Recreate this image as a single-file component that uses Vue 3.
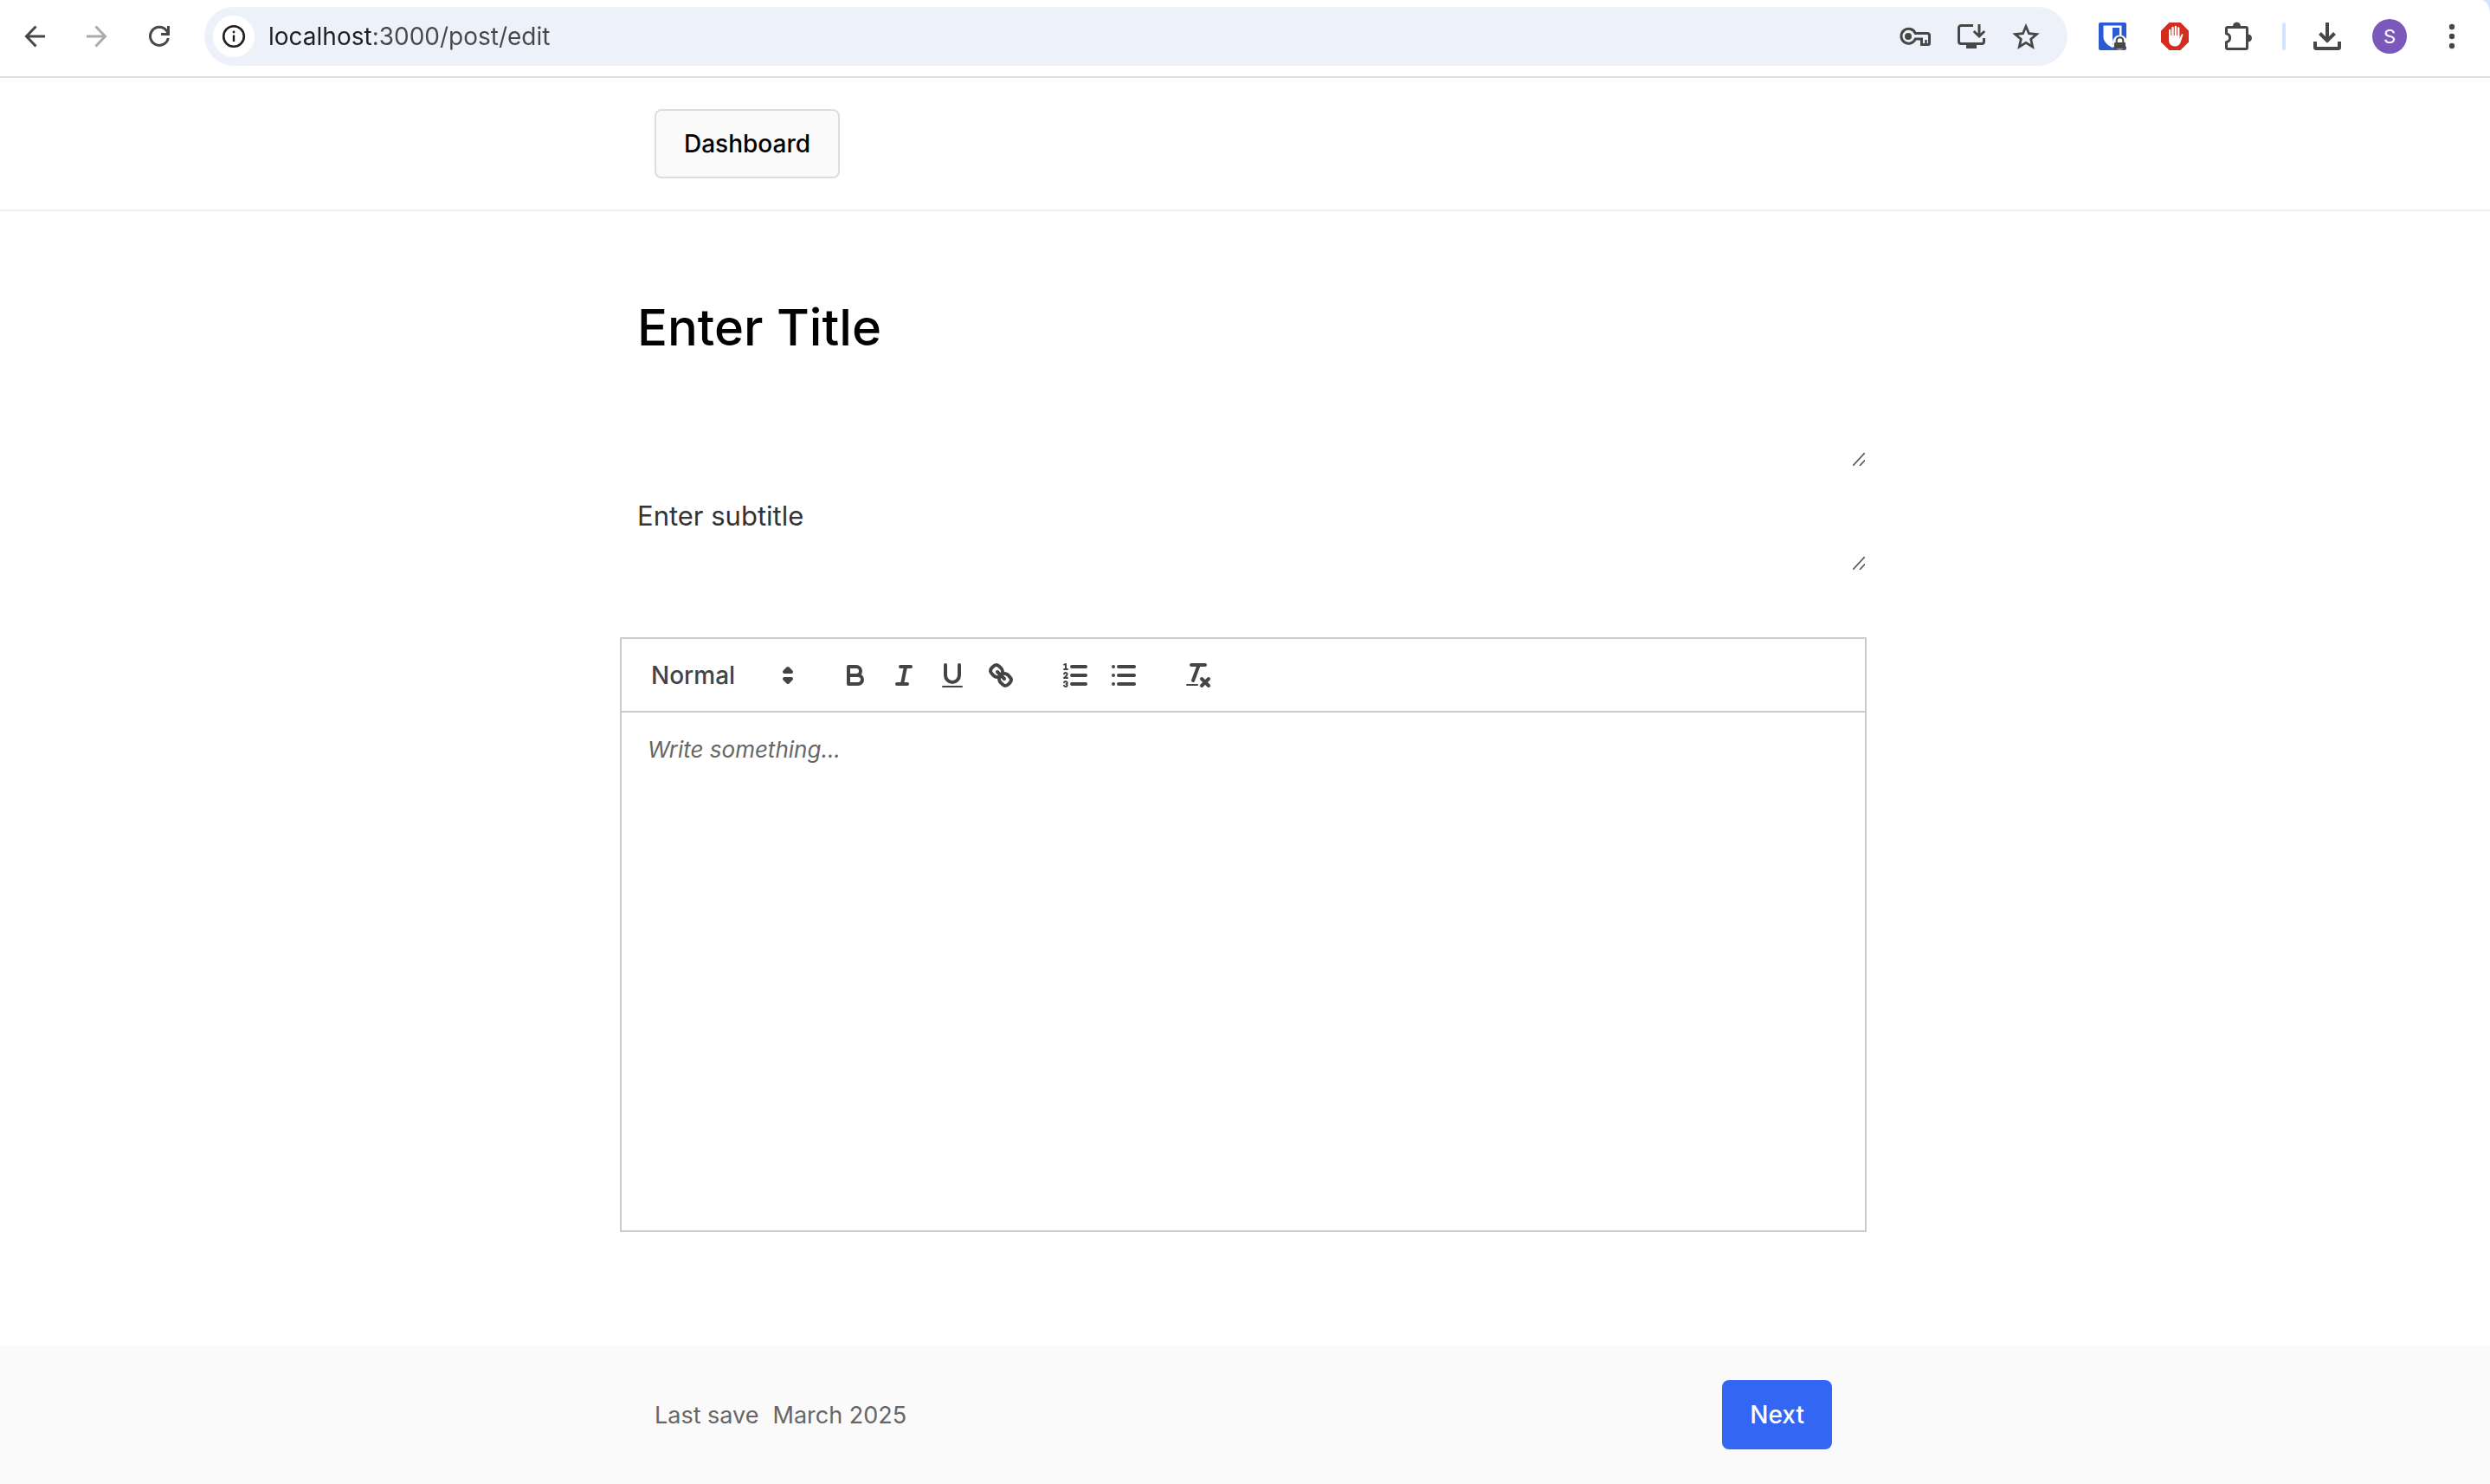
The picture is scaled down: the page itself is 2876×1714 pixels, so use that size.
<script setup>
import { ref } from 'vue'

const address = ref('localhost:3000/post/edit')
const title = ref('')
const subtitle = ref('')
const body = ref('')
const format = ref('Normal')
</script>

<template>
  <div class="page">
    <div class="browser">
      <div class="toolbar">
        <nav class="nav" aria-label="History">
          <button type="button" class="tool" aria-label="Back">
            <svg width="24" height="28" viewBox="0 0 24 28" fill="none" stroke="#474747" stroke-width="3"><path d="M24 14H3M13.500 2.500L2.500 14l11 11.500" /></svg>
          </button>
          <button type="button" class="tool" aria-label="Forward" disabled>
            <svg width="24" height="28" viewBox="0 0 24 28" fill="none" stroke="#ababab" stroke-width="3"><path d="M0 14h21M10.500 2.500l11 11.500l-11 11.500" /></svg>
          </button>
          <button type="button" class="tool" aria-label="Reload">
            <svg width="24" height="26" viewBox="0 0 24 26" fill="none" stroke="#474747" stroke-width="3"><path d="M22.300 15A10.500 10.500 0 1 1 20 6l2 3" /><path d="M22.500 1v9.500H14" /></svg>
          </button>
        </nav>

        <div class="address">
          <button type="button" class="info" aria-label="View site information">
            <svg width="28" height="28" viewBox="0 0 28 28" fill="none" stroke="#1f1f1f"><circle cx="14" cy="14" r="11.800" stroke-width="2.600" /><path d="M14 12.500V20" stroke-width="2.400" /><circle cx="14" cy="9" r="1.400" fill="#1f1f1f" stroke="none" /></svg>
          </button>
          <input v-model="address" class="url" type="text" aria-label="Address" spellcheck="false" />
          <div class="page-actions">
            <button type="button" class="tool" aria-label="Passwords">
              <svg width="36" height="24" viewBox="0 0 36 24" fill="none" stroke="#474747" stroke-width="3"><path d="M18.300 8.500H32a2.500 2.500 0 0 1 2.500 2.500v9a1.500 1.500 0 0 1-1.500 1.500h-7.500V15h-7.200a8.500 8.500 0 1 1 0-6.500z" /><circle cx="10" cy="12" r="4" fill="#474747" stroke="none" /><path d="M30.500 16v5" stroke-width="2.500" /></svg>
            </button>
            <button type="button" class="tool" aria-label="Install app">
              <svg width="32" height="28" viewBox="0 0 32 28" fill="none" stroke="#474747" stroke-width="3"><path d="M18 1.500H4A2.500 2.500 0 0 0 1.500 4v16A2.500 2.500 0 0 0 4 22.500h24a2.500 2.500 0 0 0 2.500-2.500v-4" /><path d="M25 0v13.500M18.800 8l6.200 6l6.200-6" /><path d="M10 23h12v5H10z" fill="#474747" stroke="none" /></svg>
            </button>
            <button type="button" class="tool" aria-label="Bookmark this page">
              <svg width="32" height="30" viewBox="0 0 32 30"><path d="M16 3.500l3.500 8.200l8.900.800l-6.700 5.800l2 8.700L16 22.400L8.300 27l2-8.700l-6.700-5.800l8.900-.800z" fill="none" stroke="#474747" stroke-width="2.800" /></svg>
            </button>
          </div>
        </div>

        <div class="extensions">
          <div class="pinned">
            <button type="button" class="tool" aria-label="Password vault">
              <svg width="32" height="32" viewBox="0 0 32 32"><rect width="32" height="32" rx="2" fill="#2b5ad7" /><path d="M5.500 3.500h21V17c0 5-5 9-10.500 12C10.500 26.500 5.500 22 5.500 17z" fill="#fff" /><path d="M16 6h8v12c0 3-4 6-8 8z" fill="#2b5ad7" /><circle cx="24.500" cy="23" r="8.500" fill="#f8f8f8" /><path d="M20.700 24v-3a3.800 3.800 0 0 1 7.600 0v3" fill="none" stroke="#474747" stroke-width="2" /><rect x="18" y="23" width="13" height="7.500" rx="1" fill="#474747" /></svg>
            </button>
            <button type="button" class="tool" aria-label="Ad blocker">
              <svg width="32" height="32" viewBox="0 0 32 32"><path d="M9.500 0h13L32 9.500v13L22.500 32h-13L0 22.500v-13z" fill="#d32d20" /><path d="M10.200 9v9M13.500 6v11M16.900 5v12M20.200 6.500V17" stroke="#fff" stroke-width="2.400" stroke-linecap="round" /><path d="M9 15h12.400v4l1.800-4.500c.6-1.600 2.500-1.600 2.200 0L22.500 23c-1.400 3.400-3.500 4.500-6.200 4.500c-4.700 0-7.300-3-7.300-7.500z" fill="#fff" /></svg>
            </button>
          </div>
          <button type="button" class="tool" aria-label="Extensions">
            <svg width="34" height="34" viewBox="0 0 34 34"><path d="M5 6.500h21A1.500 1.500 0 0 1 27.500 8v22a1.500 1.500 0 0 1-1.500 1.500H5A1.500 1.500 0 0 1 3.500 30v-6.500a4.800 4.800 0 0 0 0-9.500V8A1.500 1.500 0 0 1 5 6.500z" fill="none" stroke="#474747" stroke-width="3" stroke-linejoin="round" /><path d="M11.500 5a4 4 0 0 1 8 0zM28.500 15a4 4 0 0 1 0 8z" fill="#474747" stroke="#474747" /></svg>
          </button>
          <span class="divider"></span>
          <button type="button" class="tool" aria-label="Downloads">
            <svg width="32" height="32" viewBox="0 0 32 32" fill="none" stroke="#474747" stroke-width="4"><path d="M16 0v20M7.500 12.500L16 21l8.500-8.500" /><path d="M2 22v6.500A1.500 1.500 0 0 0 3.500 30h25a1.500 1.500 0 0 0 1.500-1.500V22" /></svg>
          </button>
          <button type="button" class="avatar" aria-label="Profile S">S</button>
          <button type="button" class="tool" aria-label="Menu">
            <svg width="12" height="32" viewBox="0 0 12 32" fill="#474747"><circle cx="6" cy="5" r="3.200" /><circle cx="6" cy="16" r="3.200" /><circle cx="6" cy="27" r="3.200" /></svg>
          </button>
        </div>
      </div>
    </div>

    <header class="header">
      <div class="column inset">
        <button type="button" class="btn">Dashboard</button>
      </div>
    </header>

    <main class="main">
      <div class="column form">
        <div class="field">
          <textarea v-model="title" class="title" placeholder="Enter Title" aria-label="Title"></textarea>
          <svg class="grip" width="14" height="15" viewBox="0 0 14 15" stroke="#5f5f5f" stroke-width="1.800"><path d="M0 15L14 0M8 15l6-6.500" /></svg>
        </div>
        <div class="field">
          <textarea v-model="subtitle" class="subtitle" placeholder="Enter subtitle" aria-label="Subtitle"></textarea>
          <svg class="grip" width="14" height="15" viewBox="0 0 14 15" stroke="#5f5f5f" stroke-width="1.800"><path d="M0 15L14 0M8 15l6-6.500" /></svg>
        </div>

        <section class="editor">
          <div class="formats" role="toolbar" aria-label="Formatting">
            <div class="picker">
              <select v-model="format" aria-label="Text style">
                <option>Normal</option>
                <option>Heading 1</option>
                <option>Heading 2</option>
              </select>
              <svg class="icon caret" viewBox="0 0 18 18"><path class="fill" d="M7 11l2 2l2-2zM7 7l2-2l2 2z" /><path d="M7 11l2 2l2-2zM7 7l2-2l2 2z" /></svg>
            </div>
            <div class="group">
              <button type="button" aria-label="Bold">
                <svg class="icon" viewBox="0 0 18 18"><path d="M5,4H9.5A2.5,2.5,0,0,1,12,6.500v0A2.5,2.5,0,0,1,9.500,9H5V4Z" /><path d="M5,9h5.500A2.500,2.500,0,0,1,13,11.500v0A2.500,2.500,0,0,1,10.500,14H5V9Z" /></svg>
              </button>
              <button type="button" aria-label="Italic">
                <svg class="icon" viewBox="0 0 18 18"><path d="M7 4h6M5 14h6M8 14L10 4" /></svg>
              </button>
              <button type="button" aria-label="Underline">
                <svg class="icon" viewBox="0 0 18 18"><path d="M5,3V9a4.012,4.012,0,0,0,4,4H9a4.012,4.012,0,0,0,4-4V3" /><rect x="3" y="15" width="12" height="1" rx="0.5" /></svg>
              </button>
              <button type="button" aria-label="Link">
                <svg class="icon" viewBox="0 0 18 18"><path d="M7 7l4 4" /><path d="M8.900,4.577a3.476,3.476,0,0,1,.36,4.679A3.476,3.476,0,0,1,4.577,8.900C3.185,7.500,2.035,6.400,4.217,4.217S7.500,3.185,8.900,4.577Z" /><path d="M13.423,9.100a3.476,3.476,0,0,0-4.679-.36,3.476,3.476,0,0,0,.36,4.679c1.392,1.392,2.500,2.542,4.679.36S14.815,10.500,13.423,9.100Z" /></svg>
              </button>
            </div>
            <div class="group">
              <button type="button" aria-label="Numbered list">
                <svg class="icon" viewBox="0 0 18 18"><path d="M7 4h8M7 9h8M7 14h8" /><path class="thin" d="M2.500 5.500h2" /><path class="fill" d="M3.500,6A0.500,0.500,0,0,1,3,5.500V3.085l-0.276.138A0.500,0.500,0,0,1,2.053,3c-0.124-.247-0.023-0.324.224-0.447l1-.5A0.500,0.500,0,0,1,4,2.500v3A0.500,0.500,0,0,1,3.500,6Z" /><path class="thin" d="M4.500,10.500h-2c0-.234,1.850-1.076,1.850-2.234A0.959,0.959,0,0,0,2.500,8.156" /><path class="thin" d="M2.500,14.846a0.959,0.959,0,0,0,1.850-.109A0.700,0.700,0,0,0,3.750,14a0.688,0.688,0,0,0,.6-0.736,0.959,0.959,0,0,0-1.850-.109" /></svg>
              </button>
              <button type="button" aria-label="Bulleted list">
                <svg class="icon" viewBox="0 0 18 18"><path d="M6 4h9M6 9h9M6 14h9M3 4h0M3 9h0M3 14h0" /></svg>
              </button>
            </div>
            <div class="group">
              <button type="button" aria-label="Clear formatting">
                <svg class="icon" viewBox="0 0 18 18"><path d="M5 3h8M6 12L9.350 3M11 11l4 4M15 11l-4 4" /><rect x="2" y="14" width="7" height="1" rx="0.5" /></svg>
              </button>
            </div>
          </div>
          <textarea v-model="body" class="body" placeholder="Write something..." aria-label="Body"></textarea>
        </section>
      </div>
    </main>

    <footer class="footer">
      <div class="column inset">
        <p class="saved"><span>Last save</span><time datetime="2025-03">March 2025</time></p>
        <button type="button" class="btn primary">Next</button>
      </div>
    </footer>
  </div>
</template>

<style>
body {
  background: #fff;
}
</style>

<style scoped>
.page,
.page * {
  box-sizing: border-box;
}
.page {
  display: flex;
  flex-direction: column;
  min-height: 100vh;
  font-family: Inter, "Liberation Sans", sans-serif;
  font-size: 28px;
  color: #000;
}
button,
input,
select,
textarea {
  margin: 0;
  padding: 0;
  border: 0;
  border-radius: 0;
  background: none;
  color: inherit;
  font: inherit;
  outline: none;
}
svg {
  display: block;
}

.browser {
  background: #d3e3fd;
}
.toolbar {
  display: flex;
  align-items: center;
  padding: 8px 38px 12px 28px;
  border-bottom: 2px solid #e0e0e0;
  border-top-right-radius: 10px 16px;
  background: #fff;
}
.nav {
  display: flex;
  align-items: center;
  gap: 48px;
  margin-right: 40px;
}
.address {
  display: flex;
  flex: 1;
  align-items: center;
  height: 68px;
  padding: 0 32px 0 10px;
  border-radius: 34px;
  background: #edf2fa;
}
.info {
  display: flex;
  align-items: center;
  justify-content: center;
  width: 48px;
  height: 48px;
  margin-right: 16px;
  border-radius: 50%;
  background: #fff;
}
.url {
  flex: 1;
  min-width: 0;
  height: 40px;
  background: linear-gradient(90deg, #1f1f1f 120px, #474747 120px);
  background-clip: text;
  color: transparent;
}
.page-actions {
  display: flex;
  align-items: center;
  gap: 31px;
}
.extensions {
  display: flex;
  align-items: center;
  gap: 36px;
  margin-left: 36px;
}
.pinned {
  display: flex;
  gap: 40px;
  margin-right: 4px;
}
.divider {
  width: 4px;
  height: 32px;
  margin: 0 -4px 0 -2px;
  border-radius: 2px;
  background: #d3e3fd;
}
.avatar {
  width: 40px;
  height: 40px;
  margin-right: 10px;
  border-radius: 50%;
  background: #7a59bb;
  color: #fff;
  font-size: 22px;
  line-height: 40px;
}

.column {
  width: 100%;
  max-width: 1440px;
  margin: 0 auto;
}
.inset {
  display: flex;
  align-items: center;
  justify-content: space-between;
  padding: 0 40px;
}
.header,
.main,
.footer {
  padding-right: 4px;
}
.header {
  padding-top: 36px;
  padding-bottom: 36px;
  border-bottom: 2px solid #eee;
}
.btn {
  height: 80px;
  padding: 0 32px;
  border: 2px solid #ddd;
  border-radius: 8px;
  background: #fafafa;
  font-weight: 500;
}
.btn.primary {
  border: 0;
  background: #3466f4;
  color: #fff;
}

.main {
  display: flex;
  flex: 1;
  padding-top: 72px;
  padding-bottom: 131px;
}
.form {
  display: flex;
  flex-direction: column;
  gap: 16px;
}
.field {
  position: relative;
}
.field textarea {
  display: block;
  width: 100%;
  padding: 20px;
  resize: none;
}
.title {
  height: 224px;
  font-size: 58px;
  line-height: 84px;
  font-weight: 500;
}
.title::placeholder {
  color: #000;
}
.subtitle {
  height: 104px;
  font-size: 31px;
  line-height: 40px;
}
.subtitle::placeholder {
  color: #333;
}
.grip {
  position: absolute;
  right: 2px;
  bottom: 2px;
}

.editor {
  display: flex;
  flex: 1;
  flex-direction: column;
  margin-top: 60px;
  border: 2px solid #ccc;
}
.formats {
  display: flex;
  align-items: center;
  gap: 30px;
  padding: 18px 16px 17px;
  border-bottom: 2px solid #ccc;
  color: #444;
}
.picker {
  position: relative;
  width: 196px;
}
.picker select {
  display: block;
  width: 100%;
  height: 48px;
  padding-left: 18px;
  appearance: none;
  font-weight: 500;
}
.caret {
  position: absolute;
  top: 6px;
  right: 2px;
  pointer-events: none;
}
.group {
  display: flex;
}
.group button {
  width: 56px;
  height: 48px;
  padding: 6px 10px;
}
.icon {
  width: 36px;
  height: 36px;
  fill: none;
  stroke: #444;
  stroke-width: 2;
  stroke-linecap: round;
  stroke-linejoin: round;
}
.icon rect,
.icon .fill {
  fill: #444;
  stroke: none;
}
.icon .thin {
  stroke-width: 1;
}
.body {
  display: block;
  flex: 1;
  min-height: 300px;
  padding: 24px 30px;
  resize: none;
  font-size: 26px;
  line-height: 38px;
}
.body::placeholder {
  color: #666;
  font-style: italic;
}

.footer {
  padding-top: 40px;
  padding-bottom: 40px;
  background: #fafafa;
}
.saved {
  display: flex;
  gap: 16px;
  margin: 0;
  color: #666;
  font-size: 27px;
}
</style>
